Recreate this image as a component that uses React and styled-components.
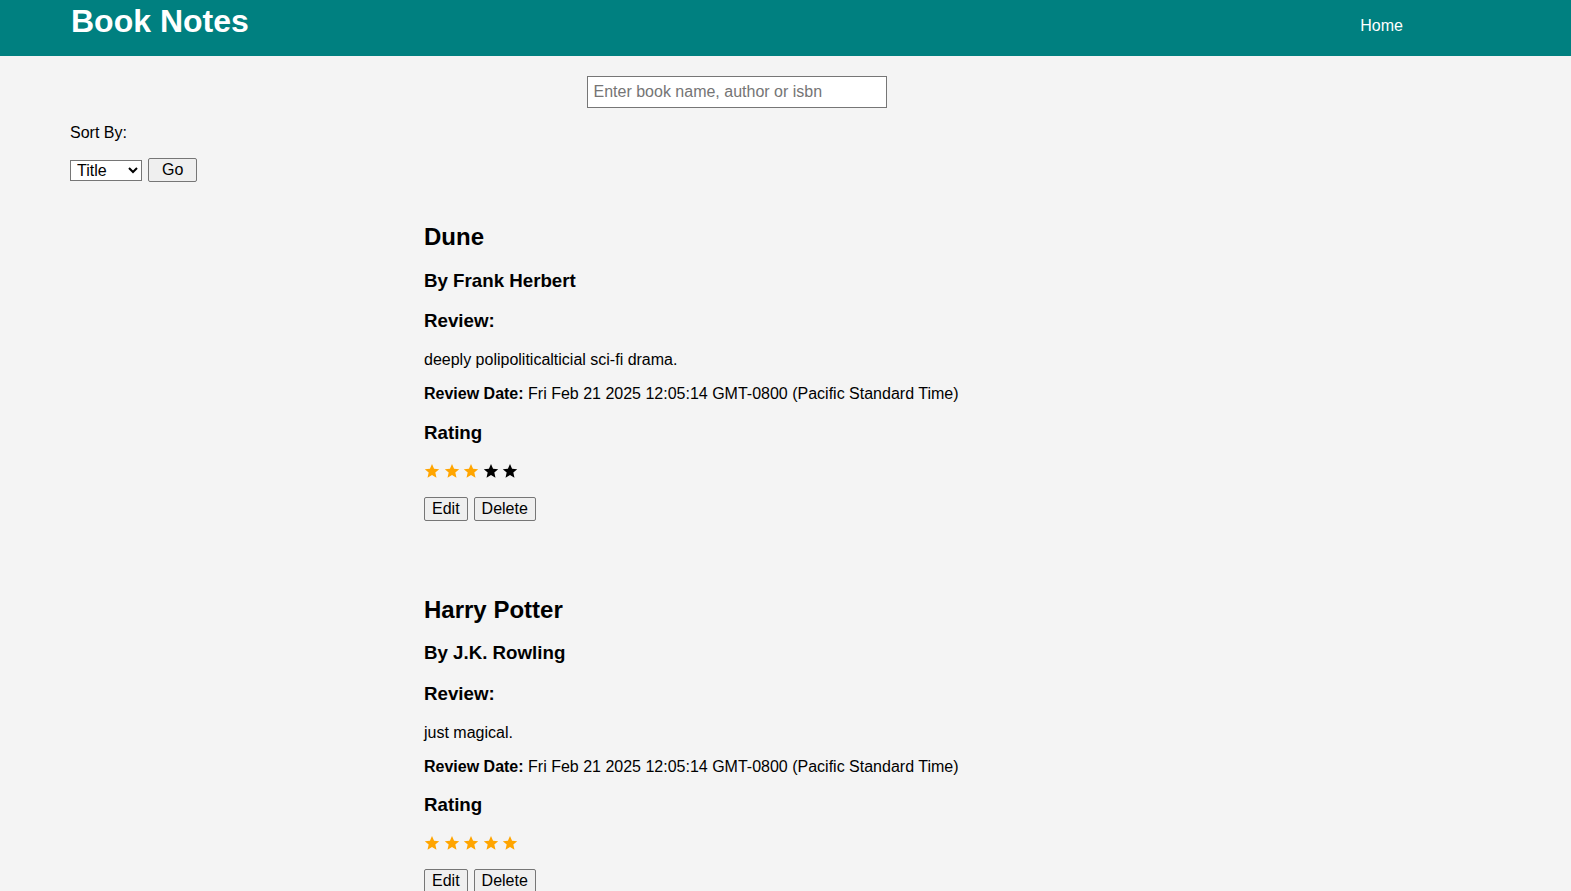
import styled, { createGlobalStyle } from "styled-components";

const GlobalStyle = createGlobalStyle`
  html, body {
    margin: 0;
    padding: 0;
    background: #f4f4f4;
    font-family: "Liberation Sans", Arial, sans-serif;
    color: #000;
  }
`;

const Header = styled.header`
  height: 56px;
  background: #008080;
  display: flex;
  justify-content: space-between;
  align-items: flex-start;
  padding: 0 168px 0 71px;
`;

const Logo = styled.h1`
  margin: 0;
  padding-top: 3px;
  font-size: 32px;
  font-weight: bold;
  color: #fff;
  line-height: normal;
`;

const NavLink = styled.a`
  color: #fff;
  font-size: 16px;
  text-decoration: none;
  margin-top: 17px;
  line-height: normal;
`;

const Main = styled.main`
  margin-left: 70px;
  width: 1331px;
`;

const SearchRow = styled.div`
  display: flex;
  justify-content: center;
  padding: 20px 0 0 2px;
`;

const SearchInput = styled.input`
  width: 300px;
  height: 32px;
  box-sizing: border-box;
  border: 1px solid #767676;
  background: #fff;
  padding: 0 6px;
  font-family: "Liberation Sans", Arial, sans-serif;
  font-size: 16px;
  &::placeholder {
    color: #757575;
  }
`;

const SortLabel = styled.p`
  margin: 16px 0 16px;
  font-size: 16px;
`;

const SortForm = styled.form`
  display: flex;
  align-items: center;
  gap: 6px;
`;

const Select = styled.select`
  width: 72px;
  height: 21px;
  font-family: "Liberation Sans", Arial, sans-serif;
  font-size: 16px;
  border: 1px solid #767676;
  border-radius: 0;
  background: #fff;
  padding: 0 0 0 2px;
`;

const Button = styled.button`
  font-family: "Liberation Sans", Arial, sans-serif;
  font-size: 16px;
  color: #000;
  background: #efefef;
  border: 1px solid #767676;
  border-radius: 2px;
  height: 24px;
  padding: ${(p) => (p.$wide ? "0 13px" : "0 7px")};
  line-height: 20px;
`;

const BookList = styled.section`
  width: 665px;
  margin: 0 auto;
`;

const Card = styled.article`
  padding: 21px 20px 18px 21px;
`;

const Title = styled.h2`
  font-size: 24px;
  margin: 20px 0 17px;
`;

const SubHeading = styled.h3`
  font-size: 18.72px;
  margin: 18.72px 0;
`;

const Text = styled.p`
  font-size: 16px;
  margin: 16px 0;
`;

const Stars = styled.div`
  display: flex;
  gap: 3.5px;
  height: 18px;
  align-items: center;
  margin: -1px 0 16px;
`;

const ButtonRow = styled.div`
  display: flex;
  gap: 6px;
  margin: 17px 0 16px;
`;

const Star = ({ filled }) => (
  <svg width="16" height="16" viewBox="0 0 24 24">
    <path
      d="M12 1.5l3.1 7.1 7.7.7-5.8 5.1 1.7 7.6L12 18l-6.7 4 1.7-7.6-5.8-5.1 7.7-.7z"
      fill={filled ? "#ffa500" : "#000"}
    />
  </svg>
);

const books = [
  {
    title: "Dune",
    author: "Frank Herbert",
    review: "deeply polipoliticalticial sci-fi drama.",
    date: "Fri Feb 21 2025 12:05:14 GMT-0800 (Pacific Standard Time)",
    rating: 3,
  },
  {
    title: "Harry Potter",
    author: "J.K. Rowling",
    review: "just magical.",
    date: "Fri Feb 21 2025 12:05:14 GMT-0800 (Pacific Standard Time)",
    rating: 5,
  },
];

const App = () => {
  return (
    <>
      <GlobalStyle />
      <Header>
        <Logo>Book Notes</Logo>
        <NavLink href="#">Home</NavLink>
      </Header>
      <Main>
        <SearchRow>
          <SearchInput placeholder="Enter book name, author or isbn" />
        </SearchRow>
        <SortLabel>Sort By:</SortLabel>
        <SortForm onSubmit={(e) => e.preventDefault()}>
          <Select defaultValue="title">
            <option value="title">Title</option>
            <option value="rating">Rating</option>
            <option value="date">Date</option>
          </Select>
          <Button $wide type="submit">Go</Button>
        </SortForm>
        <BookList>
          {books.map((b) => (
            <Card key={b.title}>
              <Title>{b.title}</Title>
              <SubHeading>By {b.author}</SubHeading>
              <SubHeading>Review:</SubHeading>
              <Text>{b.review}</Text>
              <Text>
                <strong>Review Date:</strong> {b.date}
              </Text>
              <SubHeading>Rating</SubHeading>
              <Stars>
                {[1, 2, 3, 4, 5].map((n) => (
                  <Star key={n} filled={n <= b.rating} />
                ))}
              </Stars>
              <ButtonRow>
                <Button>Edit</Button>
                <Button>Delete</Button>
              </ButtonRow>
            </Card>
          ))}
        </BookList>
      </Main>
    </>
  );
};

export default App;
